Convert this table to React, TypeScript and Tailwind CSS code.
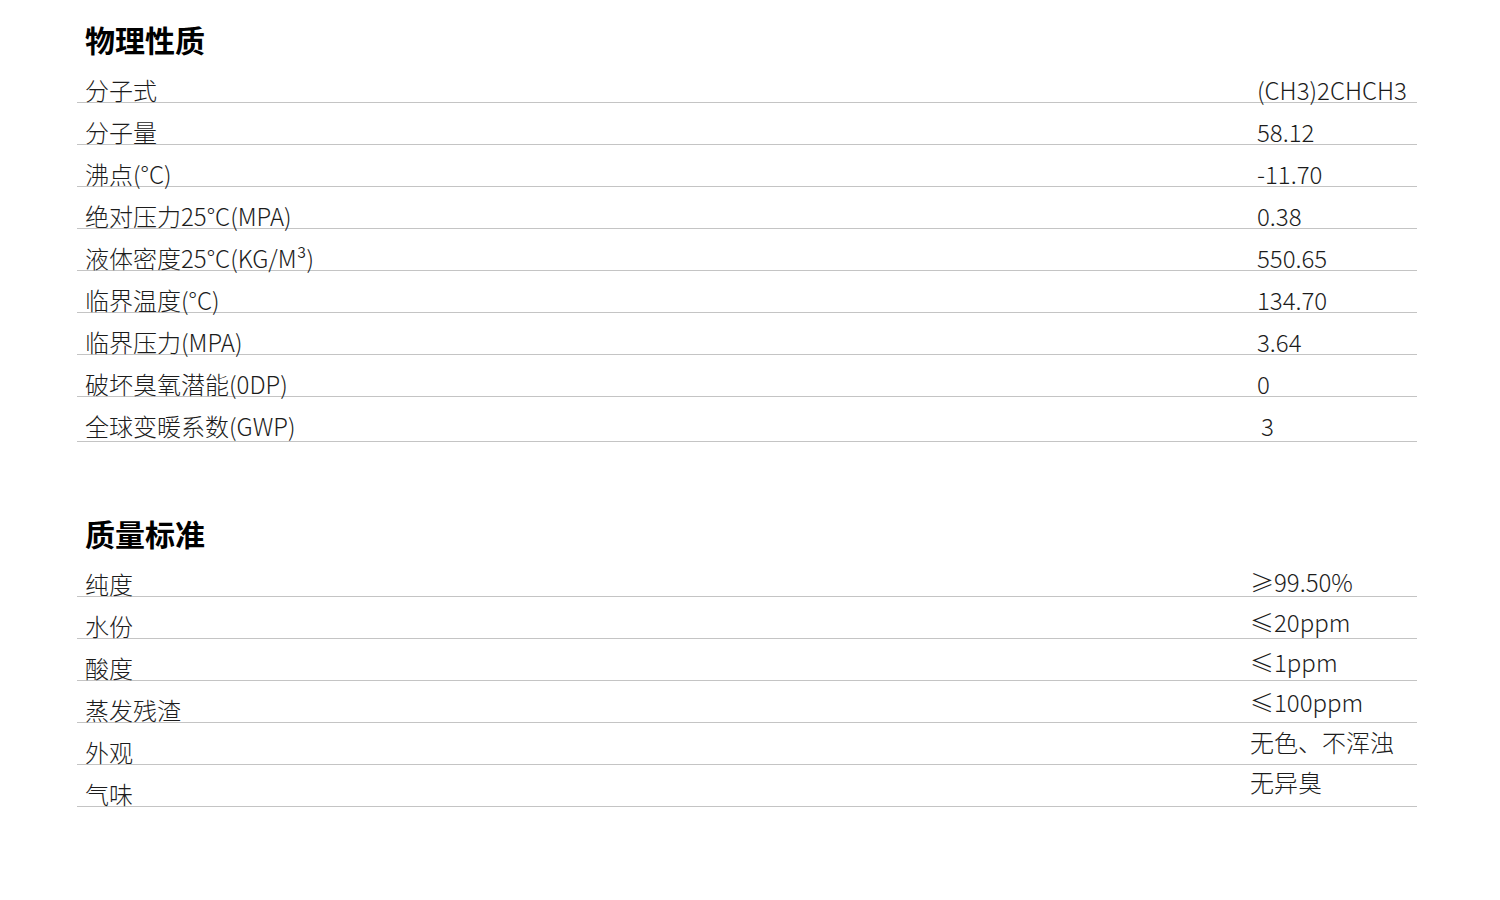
const physical: [string, string][] = [
  ["分子式", "(CH3)2CHCH3"],
  ["分子量", "58.12"],
  ["沸点(°C)", "-11.70"],
  ["绝对压力25°C(MPA)", "0.38"],
  ["液体密度25°C(KG/M³)", "550.65"],
  ["临界温度(°C)", "134.70"],
  ["临界压力(MPA)", "3.64"],
  ["破坏臭氧潜能(0DP)", "0"],
];

const quality: [string, string][] = [
  ["纯度", "≥99.50%"],
  ["水份", "≤20ppm"],
  ["酸度", "≤1ppm"],
  ["蒸发残渣", "≤100ppm"],
  ["外观", "无色、不浑浊"],
  ["气味", "无异臭"],
];

const font = { fontFamily: '"Noto Sans CJK SC", "Noto Sans", sans-serif' };

function Heading({ children }: { children: string }) {
  return (
    <h2 className="h-[42px] pl-2 text-[30px] leading-[42px] font-bold text-black">
      {children}
    </h2>
  );
}

export default function App() {
  return (
    <div className="min-h-[900px] w-[1500px] bg-white text-[#1c1c1c]" style={font}>
      <div className="ml-[77px] w-[1340px] pt-[18px]">
        {/* 物理性质 */}
        <Heading>物理性质</Heading>
        <div className="mt-[1px]">
          {physical.map(([label, value]) => (
            <div key={label} className="flex h-[42px] items-end border-b border-[#c4c4c4] text-[24px] leading-[24px] font-light">
              <div className="w-[1180px] pl-2">{label}</div>
              <div>{value}</div>
            </div>
          ))}
          <div className="flex h-[45px] items-end border-b border-[#c4c4c4] pb-[3px] text-[24px] leading-[24px] font-light">
            <div className="w-[1180px] pl-2">全球变暖系数(GWP)</div>
            <div className="ml-[4px]">3</div>
          </div>
        </div>

        {/* 质量标准 */}
        <div className="mt-[70px]">
          <Heading>质量标准</Heading>
          <div className="mt-[1px] grid">
            <div className="col-start-1 row-start-1">
              {quality.map(([label]) => (
                <div key={label} className="flex h-[42px] items-end border-b border-[#c4c4c4] text-[24px] leading-[24px] font-light">
                  <div className="pl-2">{label}</div>
                </div>
              ))}
            </div>
            <div className="col-start-1 row-start-1 pt-[7px] pl-[1173px] text-[24px] leading-[40px] font-light">
              {quality.map(([label, value]) => (
                <div key={label}>{value}</div>
              ))}
            </div>
          </div>
        </div>
      </div>
    </div>
  );
}
